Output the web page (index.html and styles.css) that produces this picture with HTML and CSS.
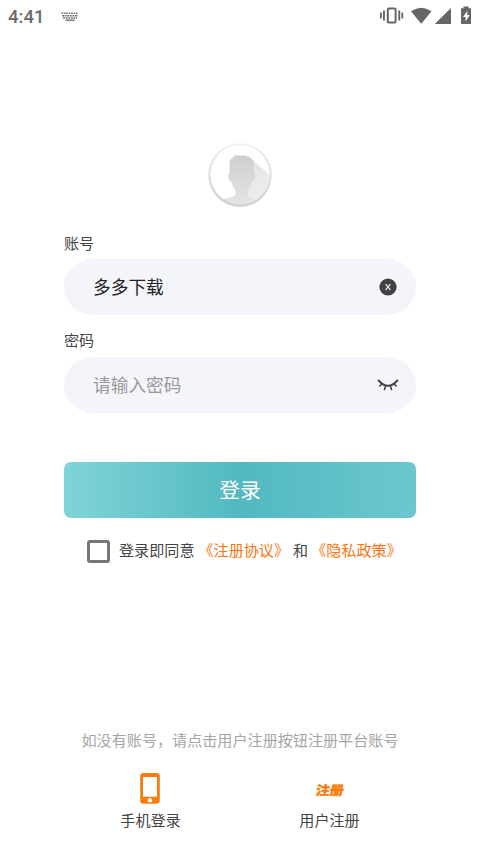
FILE: index.html
```html
<!DOCTYPE html>
<html lang="zh-CN">
<head>
<meta charset="utf-8">
<title>登录</title>
<link rel="stylesheet" href="styles.css">
</head>
<body>
<header class="status">
  <span class="time">4:41</span>
  <svg class="keyboard" width="18" height="10" viewBox="0 0 18 10" fill="none" stroke="#777" stroke-width="1.5"><path d="M.5 1.2H17" stroke-dasharray="1.7 .7"/><path d="M1 3.7H17" stroke-dasharray="2 .6"/><path d="M2 6.1H16" stroke-dasharray="2 .6"/><path d="M4.5 8.2H13.5"/></svg>
  <svg class="indicators" width="94" height="20" viewBox="0 0 94 20" fill="#666">
    <rect x="8.800" y="3.500" width="7.800" height="14" rx="1" fill="none" stroke="#666" stroke-width="2"/>
    <path d="M1.500 7.500h1.800v6H1.500zM4.500 5.500h1.900v10H4.500zM19.800 5.500H21.700v10h-1.900zM22.900 7.500H24.700v6h-1.800z" transform="translate(-.5 0)"/>
    <path d="M32 6.200Q42.300-.900 52.500 6.200L42.300 18.800z"/>
    <path d="M72 3v16H55.800z"/>
    <path fill-rule="evenodd" d="M84.500 1.500h5v1.800H92V19H82V3.300h2.500zM88.600 5.700L84 12.100h2.600v4.300L90.600 10H88z"/>
  </svg>
</header>
<main class="login">
  <svg class="avatar" width="66" height="66" viewBox="0 0 66 66">
    <defs>
      <linearGradient id="rim" x1="0" y1="0" x2="0" y2="1"><stop offset="0" stop-color="#f1f1f1"/><stop offset="1" stop-color="#cfcfcf"/></linearGradient>
      <linearGradient id="person" x1="0" y1="0" x2="0" y2="1"><stop offset="0" stop-color="#cecece"/><stop offset="1" stop-color="#e6e6e6"/></linearGradient>
      <linearGradient id="shade" x1="0" y1="0" x2=".6" y2="1"><stop offset="0" stop-color="#e2e2e2"/><stop offset="1" stop-color="#efefef"/></linearGradient>
      <clipPath id="disc"><circle cx="33" cy="33" r="29.500"/></clipPath>
    </defs>
    <circle cx="33" cy="33" r="31.800" fill="url(#rim)"/>
    <circle cx="33" cy="32.600" r="29.500" fill="#fff"/>
    <g clip-path="url(#disc)">
      <path fill="url(#shade)" d="M46 18L66 36V66H36V40z"/>
      <path fill="url(#person)" d="M27 13.500H38Q47 15 47 23V31.500Q48.500 32 48 35Q47.500 39.500 44.500 40.500Q43.500 45 41 48V53Q43 56 49 58L58 62V66H8V59L18 56.500Q27 55.500 28.500 52V48Q25.500 45 24.800 40.500Q22 39.500 21.300 35Q21 32 22.500 31.500V21Q23 16 27 15z"/>
    </g>
  </svg>
  <div class="label">账号</div>
  <div class="field">
    <span class="value">多多下载</span>
    <svg width="18" height="18" viewBox="0 0 18 18"><circle cx="9" cy="9" r="8.600" fill="#424242"/><path d="M6.600 6.100L11.400 11.900M11.400 6.100L6.600 11.900" stroke="#e8e8ec" stroke-width="1.300"/></svg>
  </div>
  <div class="label second">密码</div>
  <div class="field">
    <span class="value placeholder">请输入密码</span>
    <svg class="eye" width="22" height="14" viewBox="0 0 22 14" fill="none" stroke="#444" stroke-width="1.900" stroke-linecap="round"><path d="M1.600 2.500Q11 13 20.400 2.500"/><path stroke-width="1.600" d="M4.800 6L2.800 8M8.500 8.400L7.500 11.400M13.500 8.400L14.500 11.400M17.200 6L19.200 8"/></svg>
  </div>
  <div class="submit">登录</div>
  <div class="consent">
    <span class="box"></span>
    <span class="agree">登录即同意</span>
    <span class="link first">《注册协议》</span>
    <span class="and">和</span>
    <span class="link">《隐私政策》</span>
  </div>
</main>
<footer class="bottom">
  <p class="hint">如没有账号，请点击用户注册按钮注册平台账号</p>
  <nav class="options">
    <div class="option">
      <svg width="20" height="32" viewBox="0 0 20 32"><path fill="#f97c0c" fill-rule="evenodd" d="M3.500 0h13q3.300 0 3.300 3.300V27.500q0 3.300-3.300 3.300h-13Q.200 30.800.200 27.500V3.300Q.200 0 3.500 0zM3 4.100V23.800H17V4.100zM10 25.100a2.200 2.200 0 1 0 .01 0z"/></svg>
      <span>手机登录</span>
    </div>
    <div class="option">
      <b class="mark">注册</b>
      <span>用户注册</span>
    </div>
  </nav>
</footer>
</body>
</html>
```
FILE: styles.css
```css
* { box-sizing: border-box; }
body {
  margin: 0;
  height: 853px;
  display: flex;
  flex-direction: column;
  background: #fff;
  color: #444;
  font: 15.1px/22px Roboto, "Noto Sans CJK SC", sans-serif;
  white-space: nowrap;
  overflow: hidden;
}
.status {
  display: flex;
  height: 32px;
  padding: 0 7px 0 8px;
}
.time {
  width: 53px;
  font: 500 18.5px/34px Roboto, sans-serif;
  color: #6b6b6b;
}
.keyboard { margin-top: 12px; }
.indicators { margin: 5px 0 0 auto; }
.login {
  display: flex;
  flex-direction: column;
  padding: 110px 64px 0;
}
.avatar { align-self: center; margin-bottom: 25px; }
.label { height: 22px; margin-bottom: 4px; }
.label.second { margin-top: 15px; margin-bottom: 5px; }
.field {
  display: flex;
  align-items: center;
  justify-content: space-between;
  height: 56px;
  padding: 0 19px 0 29px;
  border-radius: 28px;
  background: #f4f5fb;
}
.value { padding-top: 2px; font-size: 17.7px; color: #222; }
.placeholder { color: #999; }
.eye { margin-right: -2px; }
.submit {
  height: 56px;
  margin-top: 49px;
  border-radius: 7px;
  background: linear-gradient(90deg, #80d4d7, #52b9c1 50%, #6bc7cf);
  color: #fff;
  font-size: 20.7px;
  line-height: 58px;
  text-align: center;
}
.consent {
  display: flex;
  align-items: center;
  height: 24px;
  margin-top: 21px;
  padding-left: 23px;
}
.box {
  width: 23px;
  height: 23px;
  margin-right: 9px;
  border: 3px solid #777;
  border-radius: 3px;
}
.agree { margin-right: 4px; }
.link { color: #f97510; }
.first { margin-right: 4px; }
.and { margin-right: 3px; }
.bottom { margin-top: auto; height: 123px; }
.hint { margin: 0; color: #a5a5a5; text-align: center; }
.options {
  display: flex;
  justify-content: center;
  margin-top: 21px;
}
.option {
  width: 179px;
  display: flex;
  flex-direction: column;
  align-items: center;
}
.option svg { margin: 0 2px 5px 0; }
.mark {
  height: 32px;
  margin-bottom: 5px;
  color: #f97c0c;
  font-size: 14px;
  font-weight: 900;
  line-height: 34px;
  transform: skewX(-8deg) scaleY(.92);
  -webkit-text-stroke: .4px #f97c0c;
}
```
